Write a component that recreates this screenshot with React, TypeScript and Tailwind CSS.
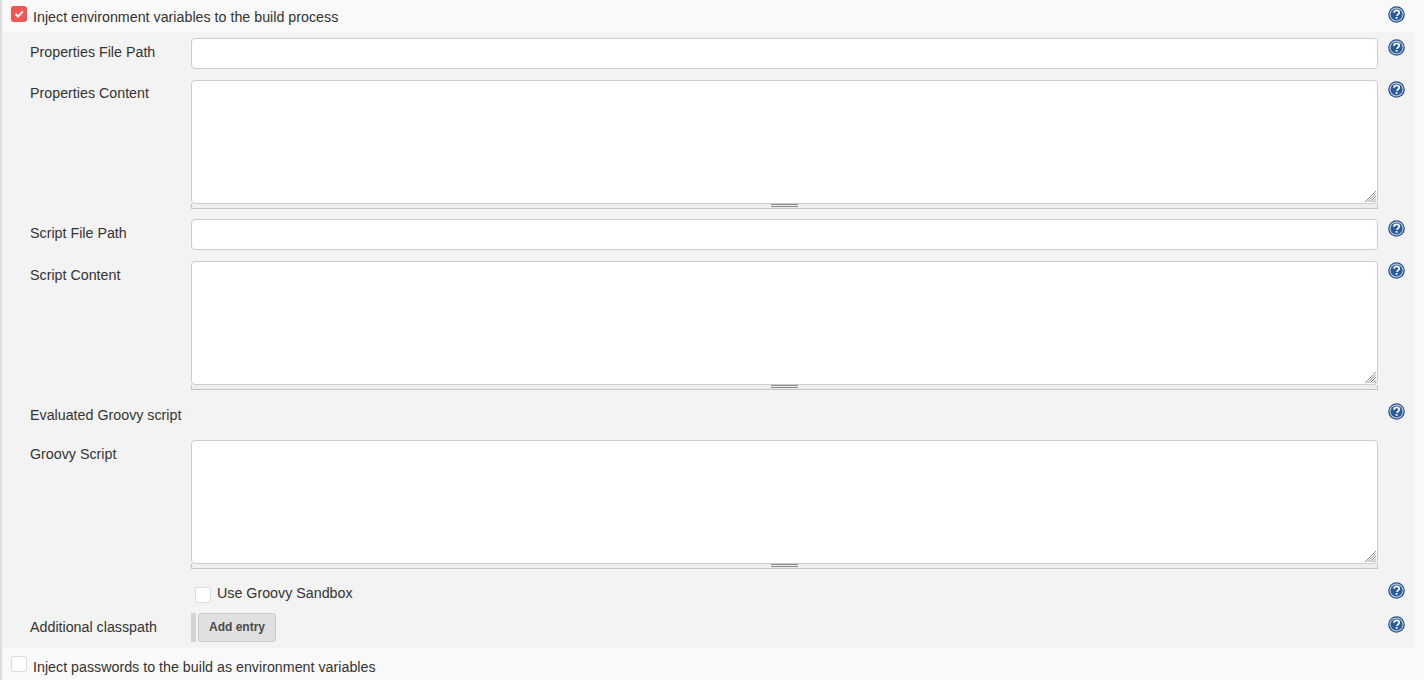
import React from 'react';

function HelpIcon() {
  return (
    <svg width="17" height="17" viewBox="0 0 17 17" className="block">
      <circle cx="8.5" cy="8.5" r="8.3" fill="#27508c" />
      <circle cx="8.5" cy="8.5" r="7" fill="#c9d6e8" />
      <circle cx="8.5" cy="8.5" r="6" fill="#2b5b9c" />
      <path
        d="M6 6.8C6 5.2 7.1 4.3 8.6 4.3c1.5 0 2.6.9 2.6 2.2 0 1-.6 1.5-1.3 2-.6.4-.8.7-.8 1.4"
        fill="none"
        stroke="#fff"
        strokeWidth="1.7"
      />
      <rect x="7.7" y="11" width="1.8" height="1.8" fill="#fff" />
    </svg>
  );
}

function CheckBox({ checked }: { checked?: boolean }) {
  if (checked) {
    return (
      <div className="flex h-4 w-4 items-center justify-center rounded-[3px] bg-[#f25555]">
        <svg width="12" height="12" viewBox="0 0 12 12">
          <path d="M2.5 6l2.5 2.5L9.8 3.5" fill="none" stroke="#fff" strokeWidth="2" />
        </svg>
      </div>
    );
  }
  return <div className="h-4 w-4 rounded-[2px] border border-[#dcdcdc] bg-white" />;
}

function TextInput() {
  return <div className="h-[31px] rounded-[4px] border border-[#cccccc] bg-white" />;
}

function TextArea() {
  return (
    <div>
      <div className="relative h-[124px] rounded-[4px] border border-[#cccccc] bg-white">
        <svg width="13" height="13" viewBox="0 0 13 13" className="absolute bottom-0 right-0">
          <path d="M12 1L1 12M12 3.5L3.5 12M12 6L6 12M12 8.5L8.5 12M12 11L11 12" stroke="#8f8f8f" strokeWidth="1" />
        </svg>
      </div>
      <div className="flex h-[5px] items-start justify-center border border-t-0 border-[#c4c4c4] bg-[#eeeeee]">
        <div className="h-[3px] w-[27px] border-y border-[#8a8a8a]" />
      </div>
    </div>
  );
}

function Row({ label, children, help, className }: { label?: string; children?: React.ReactNode; help?: string; className: string }) {
  return (
    <div className={`flex ${className}`}>
      <div className="w-[189px] shrink-0 pl-[28px] text-[14.28px] leading-[20px] text-[#333333]">{label}</div>
      <div className="min-w-0 flex-1">{children}</div>
      <div className={`w-[36px] shrink-0 pl-[10px] ${help ?? ''}`}>{help && <HelpIcon />}</div>
    </div>
  );
}

export default function App() {
  return (
    <div className="h-[680px] w-[1424px] overflow-hidden border-l-2 border-[#dddddd] bg-[#f9f9f9] font-['Liberation_Sans',Arial,sans-serif]">
      <div className="flex h-[32px]">
        <div className="flex flex-1 pl-[9px] pt-[6px] text-[14.28px] leading-[20px] text-[#333333]">
          <CheckBox checked />
          <span className="ml-[6px] mt-[1px]">Inject environment variables to the build process</span>
        </div>
        <div className="mr-[10px] w-[36px] pl-[10px] pt-[6px]"><HelpIcon /></div>
      </div>

      <div className="mr-[10px] h-[616px] bg-[#f3f3f3] pt-[6px]">
        <Row label="Properties File Path" help="pt-[1px]" className="h-[42px] [&>div:first-child]:pt-[4px]">
          <TextInput />
        </Row>
        <Row label="Properties Content" help="pt-[1px]" className="h-[139px] [&>div:first-child]:pt-[3px]">
          <TextArea />
        </Row>
        <Row label="Script File Path" help="pt-[1px]" className="h-[42px] [&>div:first-child]:pt-[4px]">
          <TextInput />
        </Row>
        <Row label="Script Content" help="pt-[1px]" className="h-[139px] [&>div:first-child]:pt-[4px]">
          <TextArea />
        </Row>
        <div className="flex h-[40px]">
          <div className="flex-1 pl-[28px] pt-[5px] text-[14.28px] leading-[20px] text-[#333333]">Evaluated Groovy script</div>
          <div className="w-[36px] pl-[10px] pt-[3px]"><HelpIcon /></div>
        </div>
        <Row label="Groovy Script" className="h-[147px] [&>div:first-child]:pt-[4px]">
          <TextArea />
        </Row>
        <div className="flex h-[26px]">
          <div className="flex flex-1 pl-[193px] text-[14.28px] leading-[20px] text-[#333333]">
            <CheckBox />
            <span className="ml-[6px] mt-[-4px]">Use Groovy Sandbox</span>
          </div>
          <div className="-mt-[5px] w-[36px] pl-[10px]"><HelpIcon /></div>
        </div>
        <Row label="Additional classpath" help="pt-[3px]" className="h-[35px] [&>div:first-child]:pt-[4px]">
          <div className="flex">
            <div className="h-[29px] w-[5px] bg-[#d3d3d3]" />
            <div className="ml-[2px] flex h-[29px] w-[78px] items-center justify-center rounded-[3px] border border-[#cccccc] bg-[#e0e0e0] pb-[2px] text-[12px] font-bold text-[#4a4a4a]">
              Add entry
            </div>
          </div>
        </Row>
      </div>

      <div className="flex pl-[9px] pt-[8px] text-[14.28px] leading-[20px] text-[#333333]">
        <CheckBox />
        <span className="ml-[6px] mt-[1px]">Inject passwords to the build as environment variables</span>
      </div>
    </div>
  );
}
